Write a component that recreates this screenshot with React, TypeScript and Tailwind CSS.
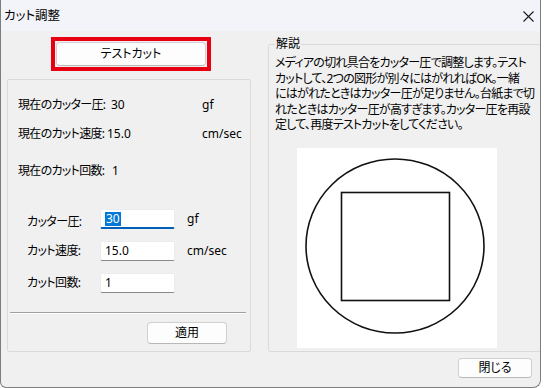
const btn =
  'flex items-center justify-center bg-[#fdfdfd] border border-[#d0d0d0] border-b-[#b8b8b8] rounded-[4px] text-[12px]';

function Field({ children, focused }: { children: React.ReactNode; focused?: boolean }) {
  return (
    <div
      className={`w-[75px] h-[20px] shrink-0 bg-white border border-[#ececec] rounded-[2px] flex items-center pl-[4px] tracking-normal ${
        focused ? 'border-b-2 border-b-[#005fb8]' : 'border-b-[#8a8a8a]'
      }`}
    >
      {children}
    </div>
  );
}

export default function App() {
  return (
    <div className="w-[544px] h-[388px] bg-white text-black text-[12px] font-['Noto_Sans','Noto_Sans_CJK_JP',sans-serif] [font-feature-settings:'palt']">
      <div className="w-[541px] h-[388px] flex flex-col bg-[#f0f0f0] border border-t-0 border-[#7d7d7d] rounded-br-[8px] rounded-bl-[6px] overflow-hidden">
        {/* title bar */}
        <div className="h-[31px] shrink-0 bg-[#f3f4f9] flex items-center justify-between pl-[3px] pr-[6px]">
          <span className="text-[12.5px] leading-[16px]">カット調整</span>
          <svg width="11" height="11" viewBox="0 0 11 11" className="mt-[1px]">
            <path d="M0.5 0.5 L10.5 10.5 M10.5 0.5 L0.5 10.5" stroke="#1a1a1a" strokeWidth="1.1" />
          </svg>
        </div>

        <div className="flex">
          {/* left column */}
          <div className="w-[244px] shrink-0 ml-[6px] pt-[6px]">
            <div className="ml-[44px] w-[160px] h-[34px] border-[4px] border-[#e60012] p-[1px]">
              <div className={`${btn} w-full h-full`}>テストカット</div>
            </div>

            <div className="mt-[8px] h-[273px] border border-[#dadada] rounded-[2px] flex flex-col whitespace-nowrap">
              <div className="pl-[10px] pt-[17px] leading-[16px]">
                <div className="flex">
                  <span className="w-[93px] shrink-0 tracking-[-0.7px]">現在のカッター圧:</span>
                  <span className="w-[91px] shrink-0">30</span>
                  <span>gf</span>
                </div>
                <div className="flex mt-[13px]">
                  <span className="w-[89px] shrink-0 tracking-[-0.7px]">現在のカット速度:</span>
                  <span className="w-[95px] shrink-0">15.0</span>
                  <span>cm/sec</span>
                </div>
                <div className="flex mt-[21px]">
                  <span className="w-[94px] shrink-0 tracking-[-0.7px]">現在のカット回数:</span>
                  <span>1</span>
                </div>
              </div>

              <div className="pl-[19px] mt-[30px] flex flex-col gap-[12px] leading-[16px]">
                <div className="flex items-center h-[20px]">
                  <span className="w-[73px] shrink-0 pt-[6px] tracking-[-0.6px]">カッター圧:</span>
                  <Field focused>
                    <span className="bg-[#0078d7] text-white px-[1px] leading-[14px]">30</span>
                  </Field>
                  <span className="ml-[12px]">gf</span>
                </div>
                <div className="flex items-center h-[20px]">
                  <span className="w-[73px] shrink-0 tracking-[-0.6px]">カット速度:</span>
                  <Field>15.0</Field>
                  <span className="ml-[12px]">cm/sec</span>
                </div>
                <div className="flex items-center h-[20px]">
                  <span className="w-[73px] shrink-0 tracking-[-0.6px]">カット回数:</span>
                  <Field>1</Field>
                </div>
              </div>

              <div className="mt-[19px] ml-[2px] mr-[4px]">
                <div className="h-px bg-[#a0a0a0]" />
                <div className="h-px bg-white" />
              </div>

              <div className={`${btn} ml-[139px] mt-[8px] w-[80px] h-[22px]`}>適用</div>
            </div>
          </div>

          {/* right column */}
          <div className="w-[265px] shrink-0 ml-[17px] pt-[5px]">
            <fieldset className="h-[316px] border border-[#dadada] rounded-[2px] px-[6px]">
              <legend className="px-[1px] leading-[16px]">解説</legend>
              <p className="mt-[3px] leading-[15.5px] whitespace-nowrap tracking-[-0.75px]">
                メディアの切れ具合をカッター圧で調整します。テスト
                <br />
                カットして、2つの図形が別々にはがれればOK。一緒
                <br />
                にはがれたときはカッター圧が足りません。台紙まで切
                <br />
                れたときはカッター圧が高すぎます。カッター圧を再設
                <br />
                定して、再度テストカットをしてください。
              </p>
              <div className="mt-[15px] ml-[22px] w-[200px] h-[200px] bg-white">
                <svg width="200" height="200" viewBox="0 0 200 200">
                  <ellipse cx="98" cy="98" rx="89" ry="87" fill="none" stroke="#111" strokeWidth="1.6" />
                  <rect x="44.5" y="44.5" width="108" height="108" fill="none" stroke="#111" strokeWidth="1.6" />
                </svg>
              </div>
            </fieldset>
          </div>
        </div>

        <div className="flex justify-end mt-[6px] mr-[8px]">
          <div className={`${btn} w-[74px] h-[20px] border-[#1f64b0] border-b-[#1f64b0]`}>閉じる</div>
        </div>
      </div>
    </div>
  );
}
